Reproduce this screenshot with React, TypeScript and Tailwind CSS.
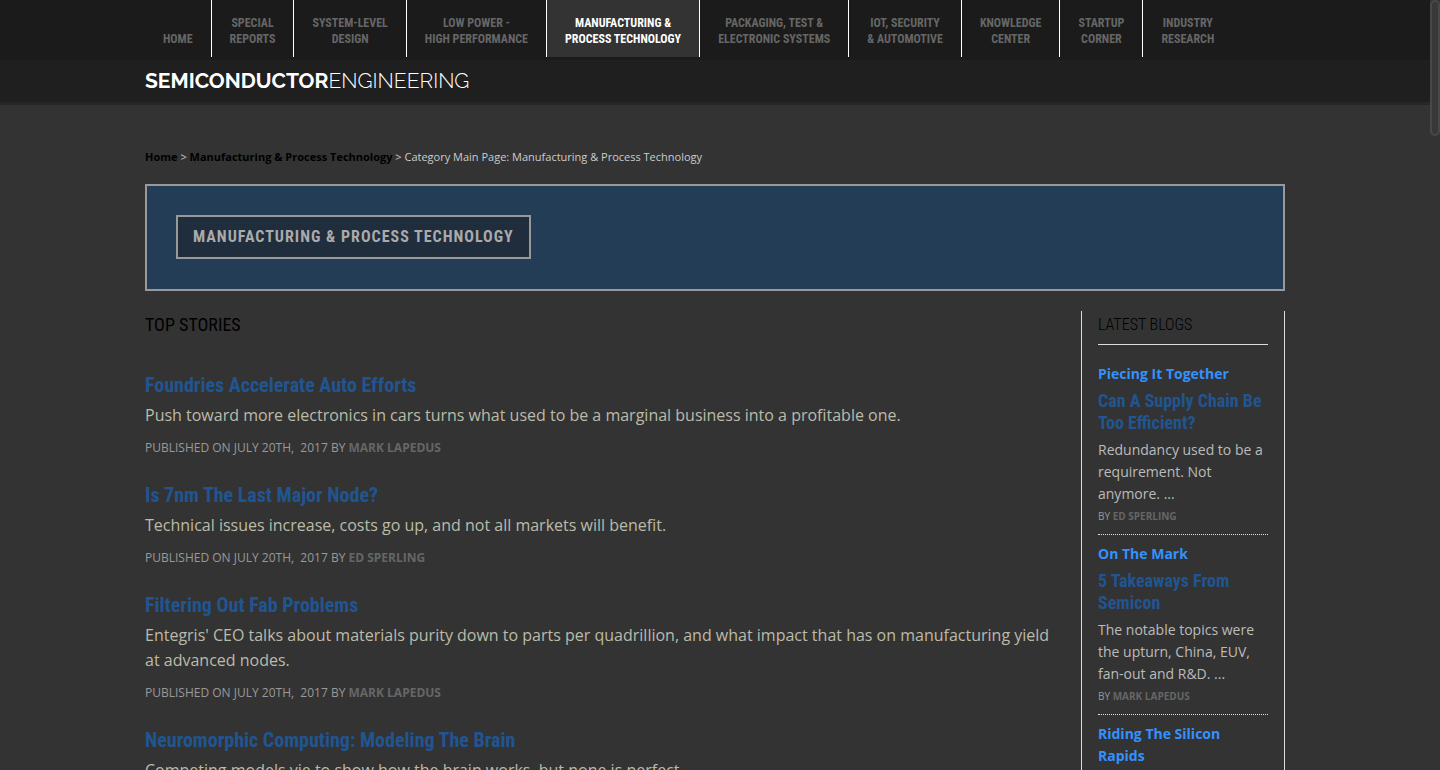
type NavItem = { lines: string[]; active?: boolean };
type Story = { title: string; summary: string; author: string };
type Blog = { blog: string; title: string; summary: string; author: string };

const navItems: NavItem[] = [
  { lines: ["Home"] },
  { lines: ["Special", "Reports"] },
  { lines: ["System-Level", "Design"] },
  { lines: ["Low Power -", "High Performance"] },
  { lines: ["Manufacturing &", "Process Technology"], active: true },
  { lines: ["Packaging, Test &", "Electronic Systems"] },
  { lines: ["IoT, Security", "& Automotive"] },
  { lines: ["Knowledge", "Center"] },
  { lines: ["Startup", "Corner"] },
  { lines: ["Industry", "Research"] },
];

const stories: Story[] = [
  {
    title: "Foundries Accelerate Auto Efforts",
    summary:
      "Push toward more electronics in cars turns what used to be a marginal business into a profitable one.",
    author: "Mark LaPedus",
  },
  {
    title: "Is 7nm The Last Major Node?",
    summary: "Technical issues increase, costs go up, and not all markets will benefit.",
    author: "Ed Sperling",
  },
  {
    title: "Filtering Out Fab Problems",
    summary:
      "Entegris' CEO talks about materials purity down to parts per quadrillion, and what impact that has on manufacturing yield at advanced nodes.",
    author: "Mark LaPedus",
  },
  {
    title: "Neuromorphic Computing: Modeling The Brain",
    summary: "Competing models vie to show how the brain works, but none is perfect.",
    author: "Mark LaPedus",
  },
];

const blogs: Blog[] = [
  {
    blog: "Piecing It Together",
    title: "Can A Supply Chain Be Too Efficient?",
    summary: "Redundancy used to be a requirement. Not anymore. ...",
    author: "Ed Sperling",
  },
  {
    blog: "On The Mark",
    title: "5 Takeaways From Semicon",
    summary: "The notable topics were the upturn, China, EUV, fan-out and R&D. ...",
    author: "Mark LaPedus",
  },
  { blog: "Riding The Silicon Rapids", title: "", summary: "", author: "" },
];

const condensed = "font-['Roboto_Condensed','Liberation_Sans_Narrow',sans-serif]";

function Header() {
  return (
    <header className="border-b-3 border-[#272727] bg-[#1f1f1f]">
      <div className="h-[60px] bg-[#1b1b1b]">
        <nav aria-label="Sections" className="mx-auto max-w-[1140px]">
          <ul className="flex">
            {navItems.map((item) => (
              <li
                key={item.lines.join(" ")}
                className="flex border-r border-white last:border-r-0"
              >
                <a
                  href="#"
                  aria-current={item.active ? "page" : undefined}
                  className={`${condensed} flex h-[57px] flex-col justify-end px-[18px] pb-[10px] text-center text-[12px] leading-4 font-bold whitespace-nowrap uppercase ${
                    item.active ? "bg-[#333] text-white" : "text-[#666]"
                  }`}
                >
                  {item.lines.map((line) => (
                    <span key={line}>{line}</span>
                  ))}
                </a>
              </li>
            ))}
          </ul>
        </nav>
      </div>
      <div className="mx-auto flex h-[42px] max-w-[1140px] items-center">
        <a
          href="#"
          className="font-['Raleway','Lato',sans-serif] text-[21px] leading-6 text-white"
        >
          <span className="font-bold">SEMICONDUCTOR</span>
          <span className="font-light">ENGINEERING</span>
        </a>
      </div>
    </header>
  );
}

function StoryItem({ story }: { story: Story }) {
  return (
    <article className="mb-[25px]">
      <h3 className={`${condensed} mb-[5px] text-[20px] leading-[25px] font-bold text-[#215591]`}>
        <a href="#">{story.title}</a>
      </h3>
      <p className="mb-[10px] text-[16px] leading-[25px] text-[#bbbbaa]">{story.summary}</p>
      <p className="text-[12px] leading-5 text-[#999] uppercase">
        Published on July 20th,&nbsp; 2017 By{" "}
        <a href="#" className="font-bold text-[#666]">
          {story.author}
        </a>
      </p>
    </article>
  );
}

function BlogItem({ entry }: { entry: Blog }) {
  return (
    <article className="mb-2 border-b border-dotted border-[#ddd] pb-[7px] text-[14px] leading-[22px]">
      <a href="#" className="block font-bold text-[#3391ff]">
        {entry.blog}
      </a>
      {entry.title && (
        <>
          <h3 className={`${condensed} my-[5px] text-[18px] leading-[22px] font-bold text-[#215591]`}>
            <a href="#">{entry.title}</a>
          </h3>
          <p className="text-[#bbb]">{entry.summary}</p>
          <p className="text-[10px] leading-[22px] text-[#999] uppercase">
            By{" "}
            <a href="#" className="font-bold text-[#666]">
              {entry.author}
            </a>
          </p>
        </>
      )}
    </article>
  );
}

export default function App() {
  return (
    <div className="flex h-screen bg-[#333] font-['Open_Sans',sans-serif] text-[#bbb]">
      <div className="min-w-0 flex-1 overflow-y-auto [scrollbar-width:none]">
        <Header />
        <main className="mx-auto max-w-[1140px]">
          <nav
            aria-label="Breadcrumb"
            className="pt-[42px] pb-[17px] text-[11px] leading-5 text-[#ccc]"
          >
            <a href="#" className="font-bold text-black">
              Home
            </a>{" "}
            &gt;{" "}
            <a href="#" className="font-bold text-black">
              Manufacturing &amp; Process Technology
            </a>{" "}
            &gt; Category Main Page: Manufacturing &amp; Process Technology
          </nav>

          <div className="mb-5 flex border-2 border-[#999] bg-[#243d56] px-[29px] pt-[29px] pb-[30px]">
            <h1
              className={`${condensed} border-2 border-[#999] bg-[#1f2d3d] px-[15px] py-[8px] text-[16px] leading-[24px] font-bold tracking-[1px] text-[#aaa] uppercase`}
            >
              Manufacturing &amp; Process Technology
            </h1>
          </div>

          <div className="flex">
            <section className="min-w-0 flex-1 pr-[30px]">
              <h2
                className={`${condensed} mt-[3px] mb-[37px] text-[18px] leading-[22px] font-normal text-black uppercase`}
              >
                Top Stories
              </h2>
              {stories.map((story) => (
                <StoryItem key={story.title} story={story} />
              ))}
            </section>

            <aside className="w-[204px] shrink-0 border-x border-[#ddd] px-4">
              <h2
                className={`${condensed} mb-[18px] border-b border-[#ddd] pt-[3px] pb-[8px] text-[16px] leading-[22px] font-light text-black uppercase`}
              >
                Latest Blogs
              </h2>
              {blogs.map((entry) => (
                <BlogItem key={entry.blog} entry={entry} />
              ))}
            </aside>
          </div>
        </main>
      </div>
      <div aria-hidden="true" className="w-[10px] shrink-0">
        <div className="h-[136px] rounded-full border-2 border-[#484848] bg-[#383838]" />
      </div>
    </div>
  );
}
